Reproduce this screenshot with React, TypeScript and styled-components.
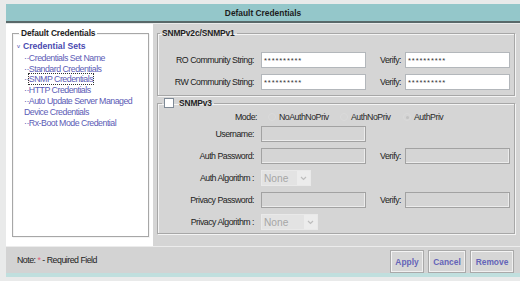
import React from "react";
import styled, { createGlobalStyle } from "styled-components";

const Global = createGlobalStyle`
  html, body { margin: 0; padding: 0; }
  body {
    background: #e9eaea;
    font-family: "Liberation Sans", Arial, sans-serif;
    font-size: 8.8px;
    color: #222;
    width: 520px;
    height: 281px;
    overflow: hidden;
  }
  * { box-sizing: border-box; }
`;

const Page = styled.div`
  padding: 4px 0 0 6px;
  width: 520px;
`;

const Header = styled.div`
  height: 19px;
  background: #94c7ca;
  border-bottom: 2px solid #59696a;
  display: flex;
  align-items: center;
  justify-content: center;
  font-weight: bold;
  font-size: 8.4px;
  color: #1c1c1c;
  margin-bottom: 1px;
`;

const Body = styled.div`
  display: flex;
  height: 222px;
`;

const LeftPane = styled.div`
  width: 147px;
  background: #fff;
  padding: 4px 4px 9px 6px;
  display: flex;
`;

const Group = styled.fieldset`
  margin: 0;
  border: 1px solid #a7a7a7;
  box-shadow: inset 1px 1px 0 #f4f4f4, 1px 1px 0 #f4f4f4;
  min-width: 0;
`;

const TreeGroup = styled(Group)`
  flex: 1;
  padding: 3px 2px 0 4px;
`;

const Legend = styled.legend<{ $ml?: number }>`
  font-weight: bold;
  font-size: 8.4px;
  line-height: 10px;
  padding: 0 2px;
  margin-left: ${(p) => p.$ml ?? 2}px;
  letter-spacing: -0.1px;
  color: #1e1e1e;
  display: flex;
  align-items: center;
  gap: 5px;
`;

const TreeRoot = styled.div`
  color: #4a4ab0;
  font-weight: bold;
  line-height: 10.8px;
  font-size: 8.6px;
  display: flex;
  align-items: center;
  gap: 2px;
  margin-bottom: 1px;
`;

const Chevron = styled.span`
  font-size: 6px;
  font-weight: normal;
  width: 4px;
`;

const TreeItem = styled.div`
  color: #5c5cb6;
  line-height: 10.8px;
  letter-spacing: -0.5px;
  padding-left: 7px;
`;

const Focused = styled.span<{ $focus?: boolean }>`
  outline: ${(p) => (p.$focus ? "1px dotted #333" : "none")};
  outline-offset: 0px;
`;

const RightPane = styled.div`
  flex: 1;
  background: #d5d5d5;
  padding: 4px 5px 0 4px;
  display: flex;
  flex-direction: column;
  gap: 2px;
`;

const FormGroup = styled(Group)<{ $pt: number; $pb: number; $gap: number }>`
  padding: ${(p) => p.$pt}px 4px ${(p) => p.$pb}px 0;
  display: flex;
  flex-direction: column;
  gap: ${(p) => p.$gap}px;
`;

const Row = styled.div<{ $h?: number }>`
  display: flex;
  align-items: center;
  height: ${(p) => p.$h ?? 16}px;
`;

const Label = styled.span<{ $w?: number }>`
  width: ${(p) => p.$w ?? 96}px;
  text-align: right;
  letter-spacing: -0.5px;
  white-space: nowrap;
  color: #222;
  flex-shrink: 0;
`;

const VerifyLabel = styled(Label)`
  width: 35px;
  margin-right: 4px;
`;

const Field = styled.div<{ $disabled?: boolean }>`
  width: 105px;
  height: 16px;
  margin-left: 7px;
  background: ${(p) => (p.$disabled ? "#d5d5d5" : "#fff")};
  border: 1px solid ${(p) => (p.$disabled ? "#a2a2a2" : "#b3b7bb")};
  box-shadow: ${(p) => (p.$disabled ? "inset -1px -1px 0 #ececec" : "none")};
  font-size: 7.5px;
  letter-spacing: 0.9px;
  padding: 4px 0 0 2px;
  line-height: 8px;
  color: #333;
  overflow: hidden;
  flex-shrink: 0;
`;

const VerifyField = styled(Field)`
  margin-left: 0;
`;

const Select = styled.div<{ $w: number }>`
  width: ${(p) => p.$w}px;
  height: 16px;
  margin-left: 7px;
  background: #e3e3e3;
  border: 1px solid #e9e9e9;
  display: flex;
  align-items: center;
  justify-content: space-between;
  font-size: 10.2px;
  color: #a6a6a6;
  padding-left: 2px;
`;

const SelectArrow = styled.span`
  width: 13px;
  height: 14px;
  background: #ececec;
  display: flex;
  align-items: center;
  justify-content: center;
`;

const Option = styled.span<{ $w: number }>`
  width: ${(p) => p.$w}px;
  display: flex;
  align-items: center;
  gap: 3px;
  letter-spacing: -0.5px;
  color: #2a2a2a;
  white-space: nowrap;
`;

const Spacer = styled.span<{ $w: number }>`
  width: ${(p) => p.$w}px;
  flex-shrink: 0;
`;

const Radio = styled.span<{ $on?: boolean }>`
  width: 8px;
  height: 8px;
  border-radius: 50%;
  border: 1px solid #dadada;
  display: flex;
  align-items: center;
  justify-content: center;
  &::after {
    content: "";
    width: 3px;
    height: 3px;
    border-radius: 50%;
    background: ${(p) => (p.$on ? "#c2c2c2" : "transparent")};
  }
`;

const Checkbox = styled.span`
  width: 10px;
  height: 10px;
  background: #fff;
  border: 1px solid #7f8a96;
  display: inline-block;
`;

const Footer = styled.div`
  height: 27px;
  background: #d3d3d3;
  border-top: 1px solid #ececec;
  display: flex;
  align-items: flex-end;
  justify-content: space-between;
  padding: 0 6px 0 11px;
`;

const Note = styled.span`
  align-self: center;
  letter-spacing: -0.5px;
  color: #222;
`;

const Req = styled.span`
  color: #e2607a;
`;

const Buttons = styled.div`
  display: flex;
  gap: 4px;
`;

const Button = styled.button<{ $w: number }>`
  width: ${(p) => p.$w}px;
  height: 23px;
  background: #d6d6d6;
  border: 1px solid #a9a9a9;
  box-shadow: inset 1px 1px 0 #f4f4f4, inset -1px -1px 0 #f0f0f0;
  font-family: "Liberation Sans", Arial, sans-serif;
  font-weight: bold;
  font-size: 8.4px;
  color: #6464b8;
  padding: 0;
  margin: 0;
`;

const BottomLine = styled.div`
  height: 4px;
  background: #c0dfde;
`;

const Stars = "**********";

function ArrowIcon() {
  return (
    <svg width="7" height="5" viewBox="0 0 7 5">
      <path d="M1 1 L3.5 3.5 L6 1" stroke="#bdbdbd" strokeWidth="1.2" fill="none" />
    </svg>
  );
}

export default function App() {
  return (
    <>
      <Global />
      <Page>
        <Header>Default Credentials</Header>
        <Body>
          <LeftPane>
            <TreeGroup>
              <Legend>Default Credentials</Legend>
              <TreeRoot>
                <Chevron>v</Chevron>Credential Sets
              </TreeRoot>
              <TreeItem>··Credentials Set Name</TreeItem>
              <TreeItem>··Standard Credentials</TreeItem>
              <TreeItem>
                ··<Focused $focus>SNMP Credentials</Focused>
              </TreeItem>
              <TreeItem>··HTTP Credentials</TreeItem>
              <TreeItem>
                ··Auto Update Server Managed
                <br />
                Device Credentials
              </TreeItem>
              <TreeItem>··Rx-Boot Mode Credential</TreeItem>
            </TreeGroup>
          </LeftPane>
          <RightPane>
            <FormGroup $pt={14} $pb={5} $gap={6}>
              <Legend>SNMPv2c/SNMPv1</Legend>
              <Row>
                <Label>RO Community String:</Label>
                <Field>{Stars}</Field>
                <VerifyLabel>Verify:</VerifyLabel>
                <VerifyField>{Stars}</VerifyField>
              </Row>
              <Row>
                <Label>RW Community String:</Label>
                <Field>{Stars}</Field>
                <VerifyLabel>Verify:</VerifyLabel>
                <VerifyField>{Stars}</VerifyField>
              </Row>
            </FormGroup>
            <FormGroup $pt={3} $pb={3} $gap={6}>
              <Legend $ml={4}>
                <Checkbox />
                SNMPv3
              </Legend>
              <Row $h={12} style={{ marginBottom: -3 }}>
                <Label $w={99}>Mode:</Label>
                <Spacer $w={11} />
                <Option $w={72}>
                  <Radio />
                  NoAuthNoPriv
                </Option>
                <Option $w={63}>
                  <Radio />
                  AuthNoPriv
                </Option>
                <Option $w={60}>
                  <Radio $on />
                  AuthPriv
                </Option>
              </Row>
              <Row>
                <Label>Username:</Label>
                <Field $disabled />
              </Row>
              <Row>
                <Label>Auth Password:</Label>
                <Field $disabled />
                <VerifyLabel>Verify:</VerifyLabel>
                <VerifyField $disabled />
              </Row>
              <Row>
                <Label>Auth Algorithm :</Label>
                <Select $w={50}>
                  None
                  <SelectArrow>
                    <ArrowIcon />
                  </SelectArrow>
                </Select>
              </Row>
              <Row>
                <Label>Privacy Password:</Label>
                <Field $disabled />
                <VerifyLabel>Verify:</VerifyLabel>
                <VerifyField $disabled />
              </Row>
              <Row>
                <Label>Privacy Algorithm :</Label>
                <Select $w={57}>
                  None
                  <SelectArrow>
                    <ArrowIcon />
                  </SelectArrow>
                </Select>
              </Row>
            </FormGroup>
          </RightPane>
        </Body>
        <Footer>
          <Note>
            Note: <Req>*</Req> - Required Field
          </Note>
          <Buttons>
            <Button $w={34}>Apply</Button>
            <Button $w={38}>Cancel</Button>
            <Button $w={44}>Remove</Button>
          </Buttons>
        </Footer>
        <BottomLine />
      </Page>
    </>
  );
}
